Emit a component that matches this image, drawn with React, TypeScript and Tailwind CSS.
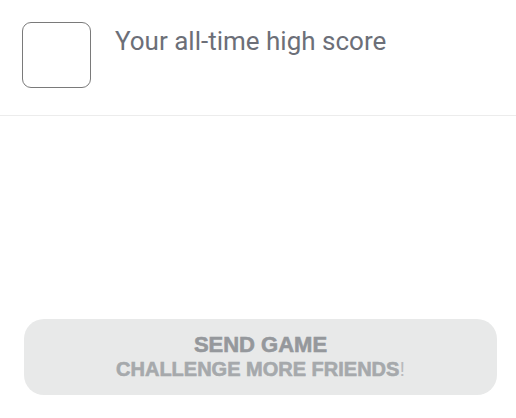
import React from "react";

export default function App() {
  return (
    <div className="w-[516px] h-[418px] bg-white flex flex-col">
      <div className="h-[116px] border-b border-[#ececec] flex items-start pl-[22px] pt-[22px]">
        <div className="w-[69px] h-[66px] border border-[#7a7a7a] rounded-[9px] shrink-0" />
        <div
          className="ml-[24px] mt-[2px] text-[26px] leading-[34px] text-[#6c6f78]"
          style={{ fontFamily: "Roboto, 'Noto Sans', sans-serif" }}
        >
          Your all-time high score
        </div>
      </div>
      <div className="flex-1" />
      <div className="pl-[24px] pb-[23px]">
        <div
          className="w-[473px] h-[76px] rounded-[20px] bg-[#e8e9e9] flex flex-col items-center justify-center"
          style={{ fontFamily: "'Liberation Sans', Arial, sans-serif" }}
        >
          <div className="text-[22px] leading-[24px] font-bold text-[#95989c] [-webkit-text-stroke:0.6px_#95989c]">
            SEND GAME
          </div>
          <div className="text-[20px] leading-[24px] font-bold text-[#a6a9ac] [-webkit-text-stroke:0.6px_#a6a9ac]">
            CHALLENGE MORE FRIENDS
            <span className="font-normal text-[#b8babd] [-webkit-text-stroke:0px_#b8babd]">!</span>
          </div>
        </div>
      </div>
    </div>
  );
}
